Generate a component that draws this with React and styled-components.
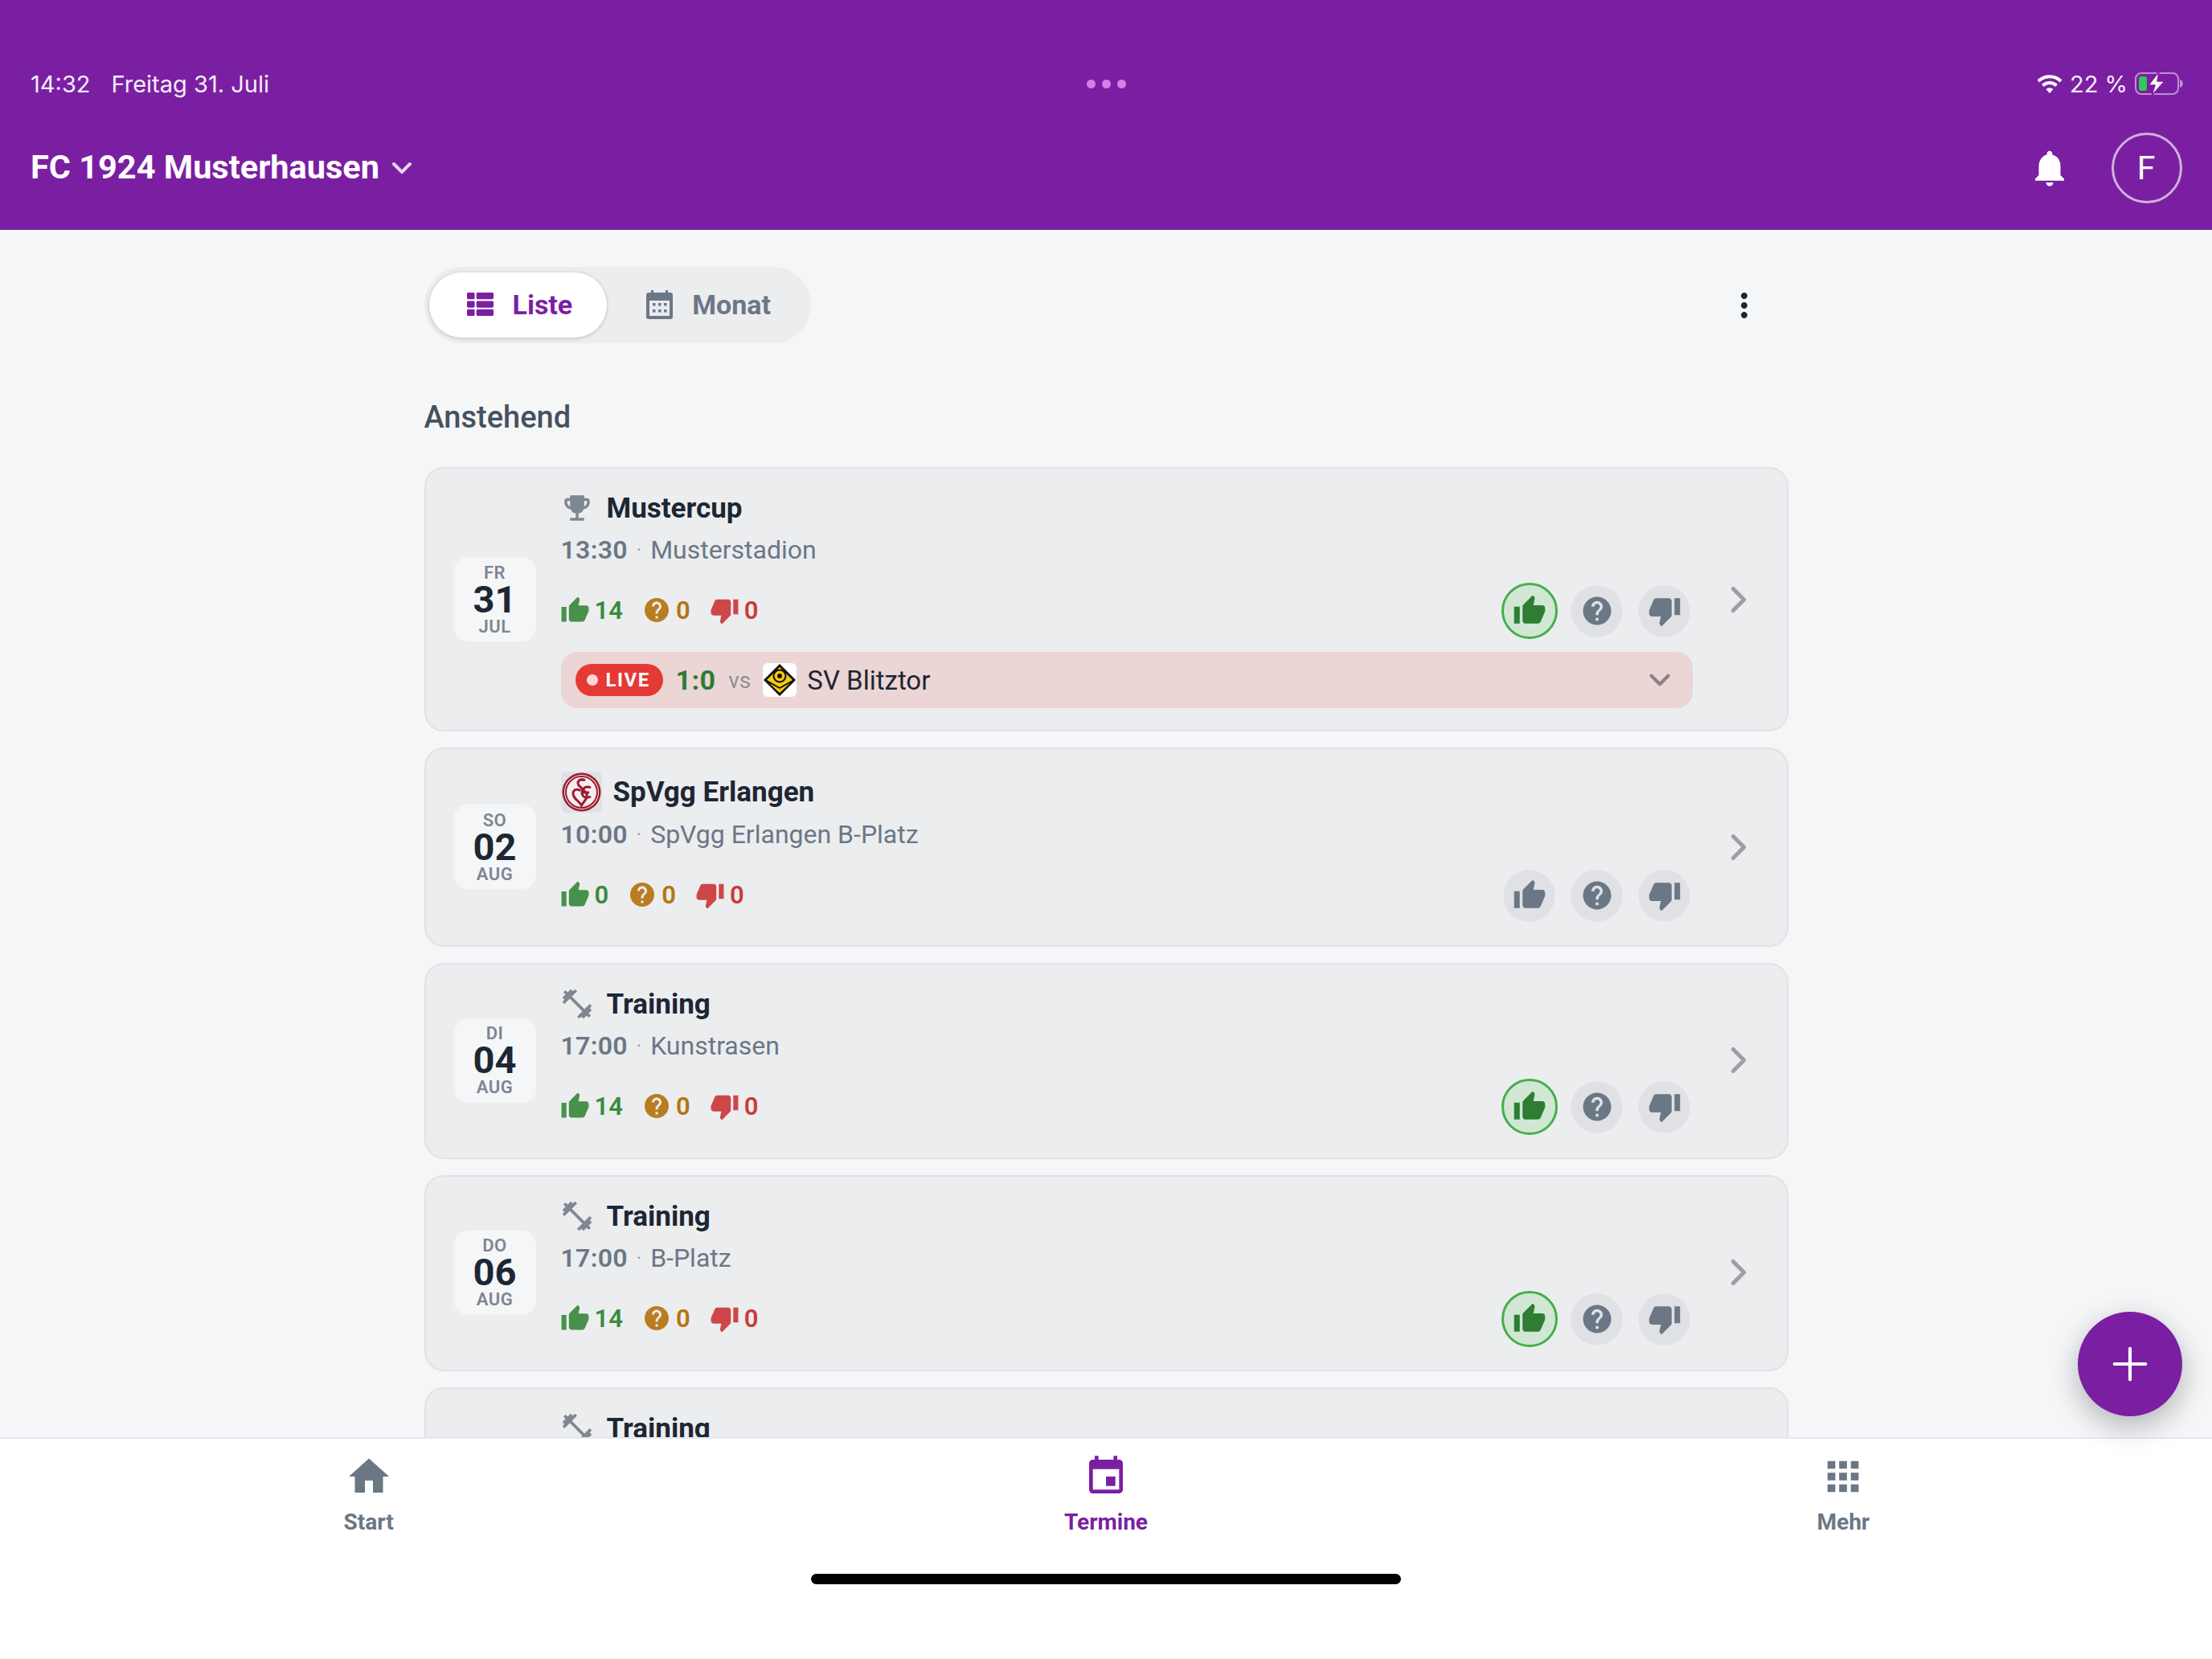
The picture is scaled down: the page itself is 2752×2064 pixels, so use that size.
import React from "react";
import styled, { createGlobalStyle } from "styled-components";
import {
  MdNotifications, MdThumbUp, MdThumbDown, MdHelp, MdEmojiEvents, MdFitnessCenter,
  MdHome, MdEvent, MdApps, MdMoreVert,
} from "react-icons/md";
import { FaThList } from "react-icons/fa";
import { ChevronDown, ChevronRight, Plus } from "lucide-react";

const Global = createGlobalStyle`
  html, body { margin: 0; padding: 0; background: #f5f6f8; }
  * { box-sizing: border-box; }
  body { font-family: Roboto, "Liberation Sans", sans-serif; }
`;

const purple = "#7B1FA2";
const ink = "#1C2733";
const slate = "#6B7785";

const Screen = styled.div`
  position: relative;
  width: 2752px;
  height: 2064px;
  overflow: hidden;
  display: flex;
  flex-direction: column;
  background: #f5f6f8;
`;

const Header = styled.header`
  flex: none;
  height: 286px;
  background: ${purple};
  color: #fff;
  padding: 84px 37px 33px 38px;
`;

const StatusBar = styled.div`
  height: 40px;
  display: grid;
  grid-template-columns: 1fr auto 1fr;
  align-items: center;
  font-family: Inter, Roboto, sans-serif;
  font-size: 29px;
  color: #f6ecfa;
`;

const StatusLeft = styled.div`
  display: flex;
  gap: 26px;
`;

const StatusDots = styled.div`
  display: flex;
  gap: 8px;
`;

const StatusDot = styled.span`
  width: 11px;
  height: 11px;
  border-radius: 50%;
  background: #d67fe6;
`;

const StatusRight = styled.div`
  display: flex;
  align-items: center;
  justify-content: flex-end;
  gap: 9px;
  margin-right: -3px;
`;

const TitleBar = styled.div`
  margin-top: 41px;
  height: 88px;
  display: flex;
  align-items: center;
  justify-content: space-between;
`;

const ClubSwitch = styled.div`
  display: flex;
  align-items: center;
  gap: 8px;
  margin-top: -4px;
  font-size: 41.5px;
  font-weight: 700;
  color: #fff;
  svg { color: rgba(255, 255, 255, 0.82); margin-top: 4px; }
`;

const HeaderActions = styled.div`
  display: flex;
  align-items: center;
  gap: 50px;
`;

const Avatar = styled.div`
  width: 88px;
  height: 88px;
  border-radius: 50%;
  border: 3px solid rgba(255, 255, 255, 0.65);
  display: flex;
  align-items: center;
  justify-content: center;
  font-size: 41px;
  padding-right: 2px;
  color: #fff;
`;

const Main = styled.main`
  flex: 1;
  min-height: 0;
  overflow: hidden;
`;

const Column = styled.div`
  width: 1697px;
  margin: 0 auto;
  padding-top: 46px;
`;

const ToolRow = styled.div`
  display: flex;
  align-items: center;
  justify-content: space-between;
  padding-right: 31px;
  color: ${ink};
`;

const Segments = styled.div`
  height: 95px;
  width: 481px;
  padding: 7px 6px;
  gap: 2px;
  border-radius: 48px;
  background: #ecedef;
  display: flex;
  align-items: stretch;
`;

const Segment = styled.div`
  display: flex;
  align-items: center;
  gap: 24px;
  padding: 0 43px 2px 47px;
  border-radius: 41px;
  font-size: 34px;
  font-weight: 700;
  color: ${(p) => (p.$active ? purple : slate)};
  background: ${(p) => (p.$active ? "#fff" : "transparent")};
  box-shadow: ${(p) => (p.$active ? "0 1px 5px rgba(0,0,0,.2)" : "none")};
`;

const SectionTitle = styled.h2`
  margin: 70px 0 40px;
  height: 44px;
  line-height: 44px;
  font-size: 38px;
  font-weight: 500;
  color: #46515D;
`;

const CardList = styled.div`
  display: flex;
  flex-direction: column;
  gap: 20px;
`;

const Card = styled.article`
  flex: none;
  display: flex;
  align-items: center;
  padding: 25px 0 ${(p) => p.$pb}px 35px;
  border: 2px solid #e1e2e5;
  border-radius: 24px;
  background: #ecedef;
`;

const DateChip = styled.div`
  flex: none;
  width: 102px;
  height: 105px;
  margin: 2px 31px 0 0;
  border-radius: 18px;
  background: #f5f6f8;
  box-shadow: 0 0 0 1px #eff0f2;
  display: flex;
  flex-direction: column;
  align-items: center;
  justify-content: center;
  color: #7d8692;
  font-size: 22px;
  font-weight: 600;
  line-height: 23px;
  letter-spacing: 0.5px;
`;

const DayNumber = styled.div`
  font-size: 47px;
  font-weight: 700;
  line-height: 44px;
  letter-spacing: 0;
  color: ${ink};
`;

const CardBody = styled.div`
  flex: none;
  width: 1408px;
`;

const TitleLine = styled.div`
  display: flex;
  align-items: center;
  gap: ${(p) => (p.$logo ? 14 : 18)}px;
  height: ${(p) => (p.$logo ? 56 : 48)}px;
  margin-bottom: ${(p) => (p.$logo ? 3 : 6)}px;
  font-size: 35px;
  font-weight: 700;
  color: ${ink};
`;

const TypeIcon = styled.span`
  width: 37px;
  margin-left: 2px;
  display: flex;
  justify-content: center;
  color: #7f8791;
  svg { flex: none; }
`;

const MetaLine = styled.div`
  height: 44px;
  display: flex;
  align-items: center;
  font-size: 32px;
  color: ${slate};
`;

const MetaTime = styled.span`
  font-weight: 600;
  letter-spacing: 0.3px;
`;

const MetaSep = styled.span`
  margin: 0 11px;
  color: #9aa1aa;
  font-size: 24px;
`;

const ActionLine = styled.div`
  margin-top: 18px;
  height: 70px;
  display: flex;
  align-items: center;
  justify-content: space-between;
`;

const Counts = styled.div`
  display: flex;
  align-items: center;
  gap: 25px;
`;

const Count = styled.div`
  display: flex;
  align-items: center;
  gap: 6px;
  font-size: 31px;
  font-weight: 600;
  color: ${(p) => p.$color};
  svg { flex: none; margin-left: -1px; opacity: 0.92; }
`;

const Votes = styled.div`
  display: flex;
  gap: 14px;
  margin-top: 2px;
`;

const VoteSlot = styled.div`
  width: 70px;
  height: 70px;
  display: flex;
  align-items: center;
  justify-content: center;
`;

const VoteButton = styled.div`
  border-radius: 50%;
  display: flex;
  align-items: center;
  justify-content: center;
  width: ${(p) => (p.$on ? 70 : 65)}px;
  height: ${(p) => (p.$on ? 70 : 65)}px;
  background: ${(p) => (p.$on ? "#d2e6d4" : "#e0e1e4")};
  border: ${(p) => (p.$on ? "3px solid #43b04a" : "1px solid #e5e6ec")};
  color: ${(p) => (p.$on ? "#2e7d32" : slate)};
`;

const LiveBar = styled.div`
  margin-top: 17px;
  height: 70px;
  border-radius: 20px;
  background: #ecd5d5;
  display: flex;
  align-items: center;
  padding: 0 18px;
`;

const LiveBadge = styled.div`
  width: 109px;
  height: 40px;
  border-radius: 20px;
  background: #e53935;
  color: #fff;
  display: flex;
  align-items: center;
  gap: 10px;
  padding-left: 14px;
  font-size: 24px;
  font-weight: 700;
  letter-spacing: 1.5px;
`;

const LiveDot = styled.span`
  width: 14px;
  height: 14px;
  border-radius: 50%;
  background: #ffd6d6;
`;

const Score = styled.span`
  margin-left: 16px;
  font-size: 34px;
  font-weight: 700;
  color: #2e7d32;
  letter-spacing: 0.4px;
`;

const Versus = styled.span`
  margin-left: 16px;
  font-size: 28px;
  color: #8c9097;
`;

const OpponentLogo = styled.span`
  display: flex;
  margin: 0 0 0 15px;
`;

const Opponent = styled.span`
  margin-left: 13px;
  font-size: 33px;
  color: ${ink};
  flex: 1;
`;

const LiveToggle = styled.span`
  display: flex;
  margin-left: auto;
  margin-right: 2px;
  color: #8a8188;
`;

const CardArrow = styled.div`
  flex: 1;
  display: flex;
  justify-content: center;
  margin-top: 2px;
  padding-right: 2px;
  color: #9d9fa4;
`;

const BottomNav = styled.nav`
  flex: none;
  height: 276px;
  background: #fff;
  border-top: 2px solid #e7e8ef;
  padding-top: 17px;
  display: flex;
  flex-direction: column;
  align-items: center;
`;

const NavItems = styled.div`
  width: 100%;
  display: grid;
  grid-template-columns: repeat(3, 1fr);
`;

const NavItem = styled.div`
  display: flex;
  flex-direction: column;
  align-items: center;
  gap: 11px;
  font-size: 28px;
  line-height: 32px;
  font-weight: 700;
  color: ${(p) => (p.$active ? purple : slate)};
`;

const NavIcon = styled.div`
  height: 60px;
  display: flex;
  align-items: center;
  justify-content: center;
`;

const HomeIndicator = styled.div`
  margin-top: 48px;
  width: 734px;
  height: 13px;
  border-radius: 7px;
  background: #000;
`;

const Fab = styled.div`
  position: absolute;
  right: 37px;
  bottom: 302px;
  width: 130px;
  height: 130px;
  border-radius: 50%;
  background: ${purple};
  color: #fff;
  display: flex;
  align-items: center;
  justify-content: center;
  box-shadow: 0 12px 36px rgba(0, 0, 0, 0.28);
`;

const WifiIcon = () => (
  <svg width="32" height="24" viewBox="0 0 32 24" fill="none" stroke="#fff" strokeWidth="4">
    <path d="M2 9 A20 20 0 0 1 30 9" />
    <path d="M7.5 14.5 A12 12 0 0 1 24.5 14.5" />
    <path d="M11.5 19 L16 24 L20.5 19 A6.5 6.5 0 0 0 11.5 19 Z" fill="#fff" stroke="none" />
  </svg>
);

const BatteryIcon = () => (
  <svg width="62" height="28" viewBox="0 0 62 28" fill="none">
    <rect x="1" y="1" width="53" height="26" rx="7" stroke="rgba(255,255,255,.5)" strokeWidth="2" />
    <path d="M56 9 C61 10 61 18 56 19 Z" fill="rgba(255,255,255,.5)" />
    <rect x="5" y="5" width="10" height="18" rx="3.5" fill="#34c759" />
    <path d="M30 -1 L17 16 H25 L21 29 L37 11 H28 Z" fill="#fff" stroke="#7B1FA2" strokeWidth="1.5" />
  </svg>
);

const MonthIcon = () => (
  <svg width="33" height="36" viewBox="0 0 33 36">
    <rect x="6" y="0" width="3" height="6" fill={slate} />
    <rect x="24" y="0" width="3" height="6" fill={slate} />
    <rect x="0" y="3" width="33" height="33" rx="3" fill={slate} />
    <rect x="4" y="13" width="25" height="19" fill="#e9ebee" />
    {[8, 15, 22].map((x) => [16, 24].map((y) => (
      <rect key={x + "-" + y} x={x} y={y} width="3.5" height="3.5" fill={slate} />
    )))}
  </svg>
);

const BlitztorLogo = () => (
  <svg width="42" height="42" viewBox="0 0 42 42">
    <rect width="42" height="42" rx="6" fill="#fff" />
    <path d="M21 1 L41 21 L21 41 L1 21 Z" fill="#111" />
    <path d="M21 5 L37 21 L21 30 L5 21 Z" fill="#f6c90e" />
    <path d="M8 25 L21 32 L34 25 L21 37 Z" fill="#f6c90e" />
    <circle cx="21" cy="16" r="7.5" fill="#f6c90e" stroke="#111" strokeWidth="2" />
    <circle cx="21" cy="16" r="3" fill="#111" />
  </svg>
);

const ErlangenLogo = () => (
  <svg width="51" height="51" viewBox="0 0 51 51" fill="none">
    <rect width="51" height="51" rx="7" fill="#e0e1e4" />
    <circle cx="25.5" cy="25.5" r="24" fill="#9b1b30" />
    <circle cx="25.5" cy="25.5" r="21.5" fill="#f3eef0" />
    <circle cx="25.5" cy="25.5" r="19.5" fill="none" stroke="#9b1b30" strokeWidth="2" />
    <path d="M30 11 C24 8 19 12 22 17 L31 26 C35 32 29 36 25.5 42 C22 36 14 33 15 26 C16 22 21 21 24 24" stroke="#9b1b30" strokeWidth="3" />
    <path d="M37 20 C31 17 26 21 26 26 C26 31 31 34 37 31 M27 26 H35" stroke="#9b1b30" strokeWidth="3" />
  </svg>
);

const events = [
  { dow: "FR", day: "31", mon: "JUL", type: "cup", title: "Mustercup", time: "13:30", place: "Musterstadion", yes: 14, on: true, live: true, pb: 27 },
  { dow: "SO", day: "02", mon: "AUG", type: "club", title: "SpVgg Erlangen", time: "10:00", place: "SpVgg Erlangen B-Platz", yes: 0, on: false, pb: 28 },
  { dow: "DI", day: "04", mon: "AUG", type: "training", title: "Training", time: "17:00", place: "Kunstrasen", yes: 14, on: true, pb: 29 },
  { dow: "DO", day: "06", mon: "AUG", type: "training", title: "Training", time: "17:00", place: "B-Platz", yes: 14, on: true, pb: 29 },
  { dow: "SA", day: "08", mon: "AUG", type: "training", title: "Training", time: "17:00", place: "Kunstrasen", yes: 14, on: true, pb: 29 },
];

const TypeGlyph = ({ type }) => {
  if (type === "club") return <ErlangenLogo />;
  return (
    <TypeIcon>
      {type === "cup" ? <MdEmojiEvents size={42} /> : <MdFitnessCenter size={44} />}
    </TypeIcon>
  );
};

const EventCard = ({ e }) => {
  const logo = e.type === "club";
  return (
    <Card $pb={e.pb}>
      <DateChip>
        <div>{e.dow}</div>
        <DayNumber>{e.day}</DayNumber>
        <div>{e.mon}</div>
      </DateChip>
      <CardBody>
        <TitleLine $logo={logo}>
          <TypeGlyph type={e.type} />
          {e.title}
        </TitleLine>
        <MetaLine>
          <MetaTime>{e.time}</MetaTime>
          <MetaSep>·</MetaSep>
          {e.place}
        </MetaLine>
        <ActionLine>
          <Counts>
            <Count $color="#3a8a3f"><MdThumbUp size={37} />{e.yes}</Count>
            <Count $color="#b5740f"><MdHelp size={36} />0</Count>
            <Count $color="#cc3a3a"><MdThumbDown size={37} />0</Count>
          </Counts>
          <Votes>
            <VoteSlot><VoteButton $on={e.on}><MdThumbUp size={42} /></VoteButton></VoteSlot>
            <VoteSlot><VoteButton><MdHelp size={42} /></VoteButton></VoteSlot>
            <VoteSlot><VoteButton><MdThumbDown size={42} /></VoteButton></VoteSlot>
          </Votes>
        </ActionLine>
        {e.live && (
          <LiveBar>
            <LiveBadge><LiveDot />LIVE</LiveBadge>
            <Score>1:0</Score>
            <Versus>vs</Versus>
            <OpponentLogo><BlitztorLogo /></OpponentLogo>
            <Opponent>SV Blitztor</Opponent>
            <LiveToggle><ChevronDown size={42} strokeWidth={2.4} /></LiveToggle>
          </LiveBar>
        )}
      </CardBody>
      <CardArrow><ChevronRight size={54} strokeWidth={2.2} /></CardArrow>
    </Card>
  );
};

export default function App() {
  return (
    <Screen>
      <Global />
      <Header>
        <StatusBar>
          <StatusLeft><span>14:32</span><span>Freitag 31. Juli</span></StatusLeft>
          <StatusDots><StatusDot /><StatusDot /><StatusDot /></StatusDots>
          <StatusRight><WifiIcon /><span>22 %</span><BatteryIcon /></StatusRight>
        </StatusBar>
        <TitleBar>
          <ClubSwitch>FC 1924 Musterhausen<ChevronDown size={40} strokeWidth={2.4} /></ClubSwitch>
          <HeaderActions>
            <MdNotifications size={54} />
            <Avatar>F</Avatar>
          </HeaderActions>
        </TitleBar>
      </Header>
      <Main>
        <Column>
          <ToolRow>
            <Segments>
              <Segment $active><FaThList size={33} />Liste</Segment>
              <Segment><MonthIcon />Monat</Segment>
            </Segments>
            <MdMoreVert size={48} />
          </ToolRow>
          <SectionTitle>Anstehend</SectionTitle>
          <CardList>
            {events.map((e) => <EventCard key={e.day} e={e} />)}
          </CardList>
        </Column>
      </Main>
      <BottomNav>
        <NavItems>
          <NavItem><NavIcon><MdHome size={60} /></NavIcon>Start</NavItem>
          <NavItem $active><NavIcon><MdEvent size={56} /></NavIcon>Termine</NavItem>
          <NavItem><NavIcon><MdApps size={58} /></NavIcon>Mehr</NavItem>
        </NavItems>
        <HomeIndicator />
      </BottomNav>
      <Fab><Plus size={66} strokeWidth={1.5} /></Fab>
    </Screen>
  );
}
